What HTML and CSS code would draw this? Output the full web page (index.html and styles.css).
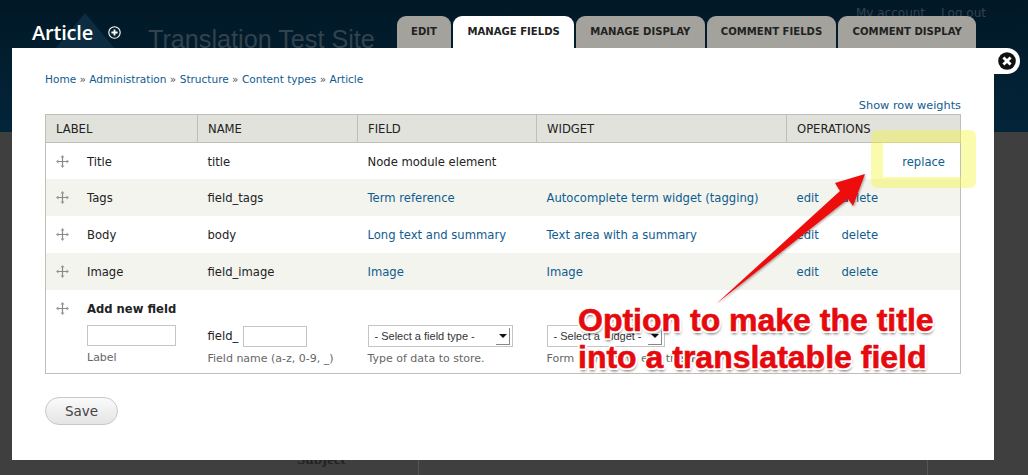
FILE: index.html
```html
<!DOCTYPE html>
<html lang="en">
<head>
    <meta charset="UTF-8">
    <meta name="viewport" content="width=device-width, initial-scale=1.0">
    <title>Article | Translation Test Site</title>
    <link rel="stylesheet" href="styles.css">
</head>
<body>
    <svg class="icon-defs" width="0" height="0">
        <symbol id="grab" viewBox="0 0 13 13">
            <path d="M6.5 1v11M1 6.5h11" stroke="#888" stroke-width="1.2" fill="none"/>
            <path d="M6.5 0l2 2.4h-4zM6.5 13l2-2.4h-4zM0 6.5l2.4-2v4zM13 6.5l-2.4-2v4z" fill="#999"/>
        </symbol>
    </svg>

    <header class="site-header">
        <svg class="site-logo" width="60" height="36" viewBox="0 0 60 36">
            <polygon points="30,0 60,36 0,36" fill="#0b2c41"/>
        </svg>
        <div class="site-name">Translation Test Site</div>
        <div class="user-links"><span>My account</span><span>Log out</span></div>
        <div class="title-row">
            <h1>Article</h1>
            <svg class="add-icon" width="13" height="13" viewBox="0 0 13 13">
                <circle cx="6.5" cy="6.5" r="5.7" fill="#04202f" stroke="#fff" stroke-width="1.1"/>
                <path d="M6.5 3.4v6.2M3.4 6.5h6.2" stroke="#fff" stroke-width="1.8"/>
            </svg>
        </div>
        <nav class="tabs">
            <a class="tab">EDIT</a>
            <a class="tab active">MANAGE FIELDS</a>
            <a class="tab">MANAGE DISPLAY</a>
            <a class="tab">COMMENT FIELDS</a>
            <a class="tab">COMMENT DISPLAY</a>
        </nav>
    </header>

    <div class="behind">
        <span class="behind-label">Subject</span>
        <div class="behind-box"></div>
    </div>

    <div class="modal">
        <div class="close-tab">
            <svg width="18" height="18" viewBox="0 0 20 20">
                <circle cx="10" cy="10" r="9.8" fill="#111"/>
                <path d="M6 6l8 8M14 6l-8 8" stroke="#fff" stroke-width="3.2"/>
            </svg>
        </div>

        <div class="breadcrumb">
            <a>Home</a> » <a>Administration</a> » <a>Structure</a> » <a>Content types</a> » <a>Article</a>
        </div>
        <div class="row-weights"><a>Show row weights</a></div>

        <table class="fields">
            <colgroup>
                <col class="c-label"><col class="c-name"><col class="c-field"><col class="c-widget"><col class="c-edit"><col>
            </colgroup>
            <thead>
                <tr>
                    <th>LABEL</th><th>NAME</th><th>FIELD</th><th>WIDGET</th><th colspan="2">OPERATIONS</th>
                </tr>
            </thead>
            <tbody>
                <tr class="first">
                    <td class="label-cell"><svg class="grab"><use href="#grab"/></svg>Title</td>
                    <td>title</td>
                    <td>Node module element</td>
                    <td></td>
                    <td colspan="2" class="replace-cell"><a>replace</a></td>
                </tr>
                <tr class="alt">
                    <td class="label-cell"><svg class="grab"><use href="#grab"/></svg>Tags</td>
                    <td>field_tags</td>
                    <td><a>Term reference</a></td>
                    <td><a>Autocomplete term widget (tagging)</a></td>
                    <td><a>edit</a></td>
                    <td><a>delete</a></td>
                </tr>
                <tr>
                    <td class="label-cell"><svg class="grab"><use href="#grab"/></svg>Body</td>
                    <td>body</td>
                    <td><a>Long text and summary</a></td>
                    <td><a>Text area with a summary</a></td>
                    <td><a>edit</a></td>
                    <td><a>delete</a></td>
                </tr>
                <tr class="alt">
                    <td class="label-cell"><svg class="grab"><use href="#grab"/></svg>Image</td>
                    <td>field_image</td>
                    <td><a>Image</a></td>
                    <td><a>Image</a></td>
                    <td><a>edit</a></td>
                    <td><a>delete</a></td>
                </tr>
                <tr class="add-row">
                    <td class="label-cell">
                        <svg class="grab"><use href="#grab"/></svg><strong>Add new field</strong>
                        <div class="form-item">
                            <input class="text-input label-input" type="text">
                            <div class="hint">Label</div>
                        </div>
                    </td>
                    <td>
                        <div class="form-item spaced">
                            <div class="prefix-row">field_ <input class="text-input name-input" type="text"></div>
                            <div class="hint">Field name (a-z, 0-9, _)</div>
                        </div>
                    </td>
                    <td>
                        <div class="form-item spaced">
                            <div class="fake-select type-select">- Select a field type -<span class="select-arrow"></span></div>
                            <div class="hint">Type of data to store.</div>
                        </div>
                    </td>
                    <td colspan="3">
                        <div class="form-item spaced">
                            <div class="fake-select widget-select">- Select a widget -<span class="select-arrow"></span></div>
                            <div class="hint">Form element to edit the data.</div>
                        </div>
                    </td>
                </tr>
            </tbody>
        </table>

        <button class="save">Save</button>
    </div>

    <div class="highlight"></div>
    <svg class="arrow" width="170" height="145" viewBox="710 170 170 145">
        <defs>
            <filter id="arrow-shadow" x="-10%" y="-10%" width="120%" height="120%">
                <feDropShadow dx="1" dy="1" stdDeviation="1.2" flood-color="#000" flood-opacity=".35"/>
            </filter>
        </defs>
        <polygon points="865,174 835,183 840,191 716,304 848,199 853,206" fill="#ee0c10" filter="url(#arrow-shadow)"/>
    </svg>
    <div class="callout">Option to make the title<br>into a translatable field</div>
</body>
</html>
```

FILE: styles.css
```css
* {
    margin: 0;
    padding: 0;
    box-sizing: border-box;
}

html, body {
    height: 475px;
    overflow: hidden;
}

body {
    position: relative;
    font-family: "DejaVu Sans", Verdana, sans-serif;
    font-size: 11.6px;
    color: #222;
    background: #3f3f3f;
}

a {
    color: #0f5c8f;
}

.icon-defs {
    position: absolute;
}

/* header behind the overlay */

.site-header {
    position: relative;
    height: 132px;
    padding: 16px 52px 0 32px;
    display: flex;
    justify-content: space-between;
    background: linear-gradient(180deg, #011826 0%, #03253a 100%);
}

.site-logo {
    position: absolute;
    left: 55px;
    top: 13px;
}

.title-row {
    position: relative;
    display: flex;
    align-items: center;
    gap: 15px;
    height: 32px;
}

h1 {
    font-family: "Open Sans", "DejaVu Sans", sans-serif;
    font-size: 20px;
    font-weight: 600;
    color: #fff;
    letter-spacing: -0.2px;
}

.site-name {
    position: absolute;
    left: 148px;
    top: 25px;
    font-family: "Liberation Sans", sans-serif;
    font-size: 25.2px;
    color: #33424c;
}

.user-links {
    position: absolute;
    left: 856px;
    top: 6px;
    display: flex;
    gap: 16px;
    font-size: 12px;
    color: #33424c;
}

.tabs {
    position: relative;
    display: flex;
    gap: 2px;
    height: 32px;
}

.tab {
    display: flex;
    align-items: center;
    padding: 0 14.2px 2px;
    border-radius: 9px 9px 0 0;
    background: #a3a29c;
    color: #222;
    font-size: 10.1px;
    font-weight: bold;
}

.tab.active {
    background: #fff;
}

.behind {
    display: flex;
    padding-left: 297px;
    height: 343px;
}

.behind-label {
    margin-top: 319px;
    font-family: "Liberation Serif", serif;
    font-size: 15px;
    font-weight: bold;
    color: #222;
}

.behind-box {
    width: 510px;
    margin-left: 73px;
    margin-top: 328px;
    border-left: 1px solid #555;
    border-right: 1px solid #555;
}

/* overlay */

.modal {
    position: absolute;
    left: 12px;
    top: 48px;
    width: 982px;
    height: 412px;
    padding: 24px 33px 0;
    background: #fff;
}

.close-tab {
    position: absolute;
    left: 982px;
    top: 0;
    width: 26px;
    height: 26px;
    display: flex;
    align-items: center;
    justify-content: flex-start;
    padding-left: 4px;
    background: #fff;
    border-radius: 0 13px 13px 0;
}

.breadcrumb {
    font-size: 10.55px;
    line-height: 14px;
    color: #555;
}

.row-weights {
    margin-top: 12px;
    text-align: right;
    font-size: 11.3px;
    line-height: 15px;
}

/* fields table */

.fields {
    width: 916px;
    margin-top: 1px;
    border-collapse: collapse;
    table-layout: fixed;
    border: 1px solid #bebfb9;
}

.c-label { width: 152px; }
.c-name { width: 160px; }
.c-field { width: 179px; }
.c-widget { width: 250px; }
.c-edit { width: 45px; }

th {
    height: 28px;
    padding: 0 10px;
    text-align: left;
    font-weight: normal;
    background: #e1e2dc;
    border-right: 1px solid #bebfb9;
    border-bottom: 1px solid #bebfb9;
}

th:last-child {
    border-right: 0;
}

td {
    height: 37px;
    padding: 2px 10px 0;
    white-space: nowrap;
}

.first td {
    height: 36px;
}

.alt td {
    background: #f3f4ee;
}

.label-cell {
    padding-left: 10px;
}

.grab {
    width: 13px;
    height: 13px;
    margin-right: 18px;
    vertical-align: -2px;
}

.replace-cell {
    text-align: right;
    padding-right: 15px;
}

.add-row td {
    height: 84px;
    vertical-align: top;
    padding-top: 12px;
}

.form-item {
    margin: 9px 0 0 31px;
}

.form-item.spaced {
    margin: 24px 0 0;
}

.text-input {
    height: 21px;
    border: 1px solid #c4c4c4;
    background: #fff;
    vertical-align: middle;
}

.label-input { width: 89px; }
.name-input { width: 64px; margin-left: 1px; }

.prefix-row {
    height: 21px;
}

.hint {
    margin-top: 5px;
    font-size: 11px;
    line-height: 14px;
    color: #666;
}

.fake-select {
    position: relative;
    height: 22px;
    padding: 0 6px;
    display: flex;
    align-items: center;
    border: 1px solid #c4c4c4;
    font-family: "Liberation Sans", sans-serif;
    font-size: 11px;
    color: #333;
    margin-top: -1px;
}

.type-select { width: 145px; }
.widget-select { width: 118px; }

.select-arrow {
    position: absolute;
    right: 2px;
    top: 2px;
    width: 14px;
    height: 17px;
    border-right: 1px solid #888;
    border-bottom: 1px solid #888;
}

.select-arrow::after {
    content: "";
    position: absolute;
    left: 3px;
    top: 6px;
    border-left: 4px solid transparent;
    border-right: 4px solid transparent;
    border-top: 4px solid #111;
}

.save {
    display: block;
    width: 73px;
    height: 28px;
    margin-top: 23px;
    border: 1px solid #c8c8c8;
    border-radius: 14px;
    background: linear-gradient(180deg, #fbfbfb, #e4e4e4);
    font-family: "DejaVu Sans", sans-serif;
    font-size: 13.5px;
    color: #444;
}

/* annotation on top of the screenshot */

.highlight {
    position: absolute;
    left: 871px;
    top: 130px;
    width: 105px;
    height: 58px;
    border: solid rgba(245, 245, 60, 0.42);
    border-width: 13px 15px 11px 12px;
    border-radius: 6px;
}

.arrow {
    position: absolute;
    left: 710px;
    top: 170px;
}

.callout {
    position: absolute;
    left: 578px;
    top: 302px;
    font-family: "Liberation Sans", sans-serif;
    font-size: 32px;
    font-weight: bold;
    line-height: 37px;
    white-space: nowrap;
    color: #e60a0e;
    -webkit-text-stroke: 0.6px #e60a0e;
    text-shadow:
        -1.5px -1.5px 0 #fff, 1.5px -1.5px 0 #fff,
        -1.5px 1.5px 0 #fff, 1.5px 1.5px 0 #fff,
        0 -2.2px 0 #fff, 0 2.2px 0 #fff, -2.2px 0 0 #fff, 2.2px 0 0 #fff,
        1px 3px 3px rgba(0, 0, 0, 0.6);
}
```
